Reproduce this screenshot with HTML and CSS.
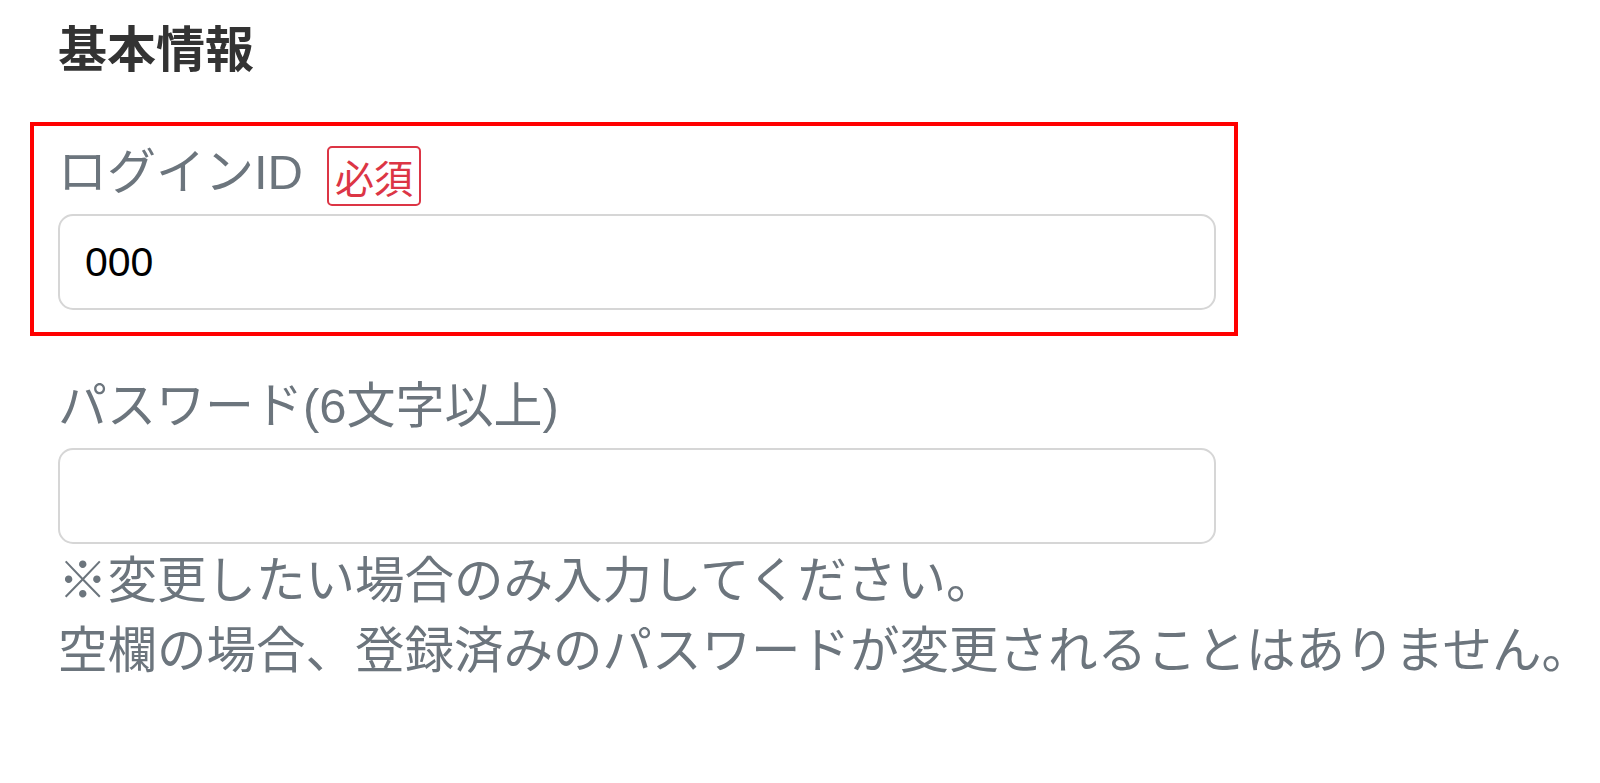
FILE: index.html
```html
<!DOCTYPE html>
<html lang="ja">
<head>
<meta charset="utf-8">
<title>基本情報</title>
<link rel="stylesheet" href="styles.css">
</head>
<body>
<main class="page">
  <h2 class="title">基本情報</h2>
  <div class="field field-highlight">
    <div class="label-row">
      <label class="label" for="login">ログインID</label>
      <span class="badge">必須</span>
    </div>
    <input class="input" id="login" type="text" value="000">
  </div>
  <div class="field">
    <div class="label-row">
      <label class="label" for="pw">パスワード(6文字以上)</label>
    </div>
    <input class="input" id="pw" type="password" value="">
    <p class="help">※変更したい場合のみ入力してください。<br>空欄の場合、登録済みのパスワードが変更されることはありません。</p>
  </div>
</main>
</body>
</html>
```

FILE: styles.css
```css
html, body {
  margin: 0;
  padding: 0;
  background: #ffffff;
}

body {
  font-family: "Liberation Sans", "Noto Sans CJK JP", sans-serif;
  color: #212529;
}

.page {
  padding: 17px 0 0 30px;
}

.title {
  margin: 0 0 38px 28px;
  font-size: 49px;
  line-height: 67px;
  font-weight: 700;
  color: #333333;
}

.field {
  border: 4px solid transparent;
  padding: 13px 18px 22px 24px;
}

.field + .field {
  margin-top: 20px;
  padding-bottom: 0;
}

.field-highlight {
  width: 1158px;
  border-color: #ff0000;
}

.label-row {
  display: flex;
  align-items: center;
  gap: 24px;
  margin-bottom: 8px;
}

.label {
  font-size: 49px;
  line-height: 67px;
  color: #6c757d;
}

.badge {
  font-family: "Noto Sans CJK JP", sans-serif;
  font-size: 39px;
  line-height: 56px;
  padding: 0 6px;
  color: #dc3545;
  border: 2px solid #dc3545;
  border-radius: 5px;
  margin-top: 6px;
}

.input {
  display: block;
  box-sizing: border-box;
  width: 1158px;
  height: 96px;
  margin: 0;
  padding: 0 25px;
  border: 2px solid #d6d6d6;
  border-radius: 15px;
  background: #ffffff;
  font-family: "Liberation Sans", sans-serif;
  font-size: 41px;
  color: #000000;
  outline: none;
}

.help {
  margin: 2px 0 0;
  font-size: 49.5px;
  line-height: 70px;
  color: #6c757d;
  white-space: nowrap;
}
```
